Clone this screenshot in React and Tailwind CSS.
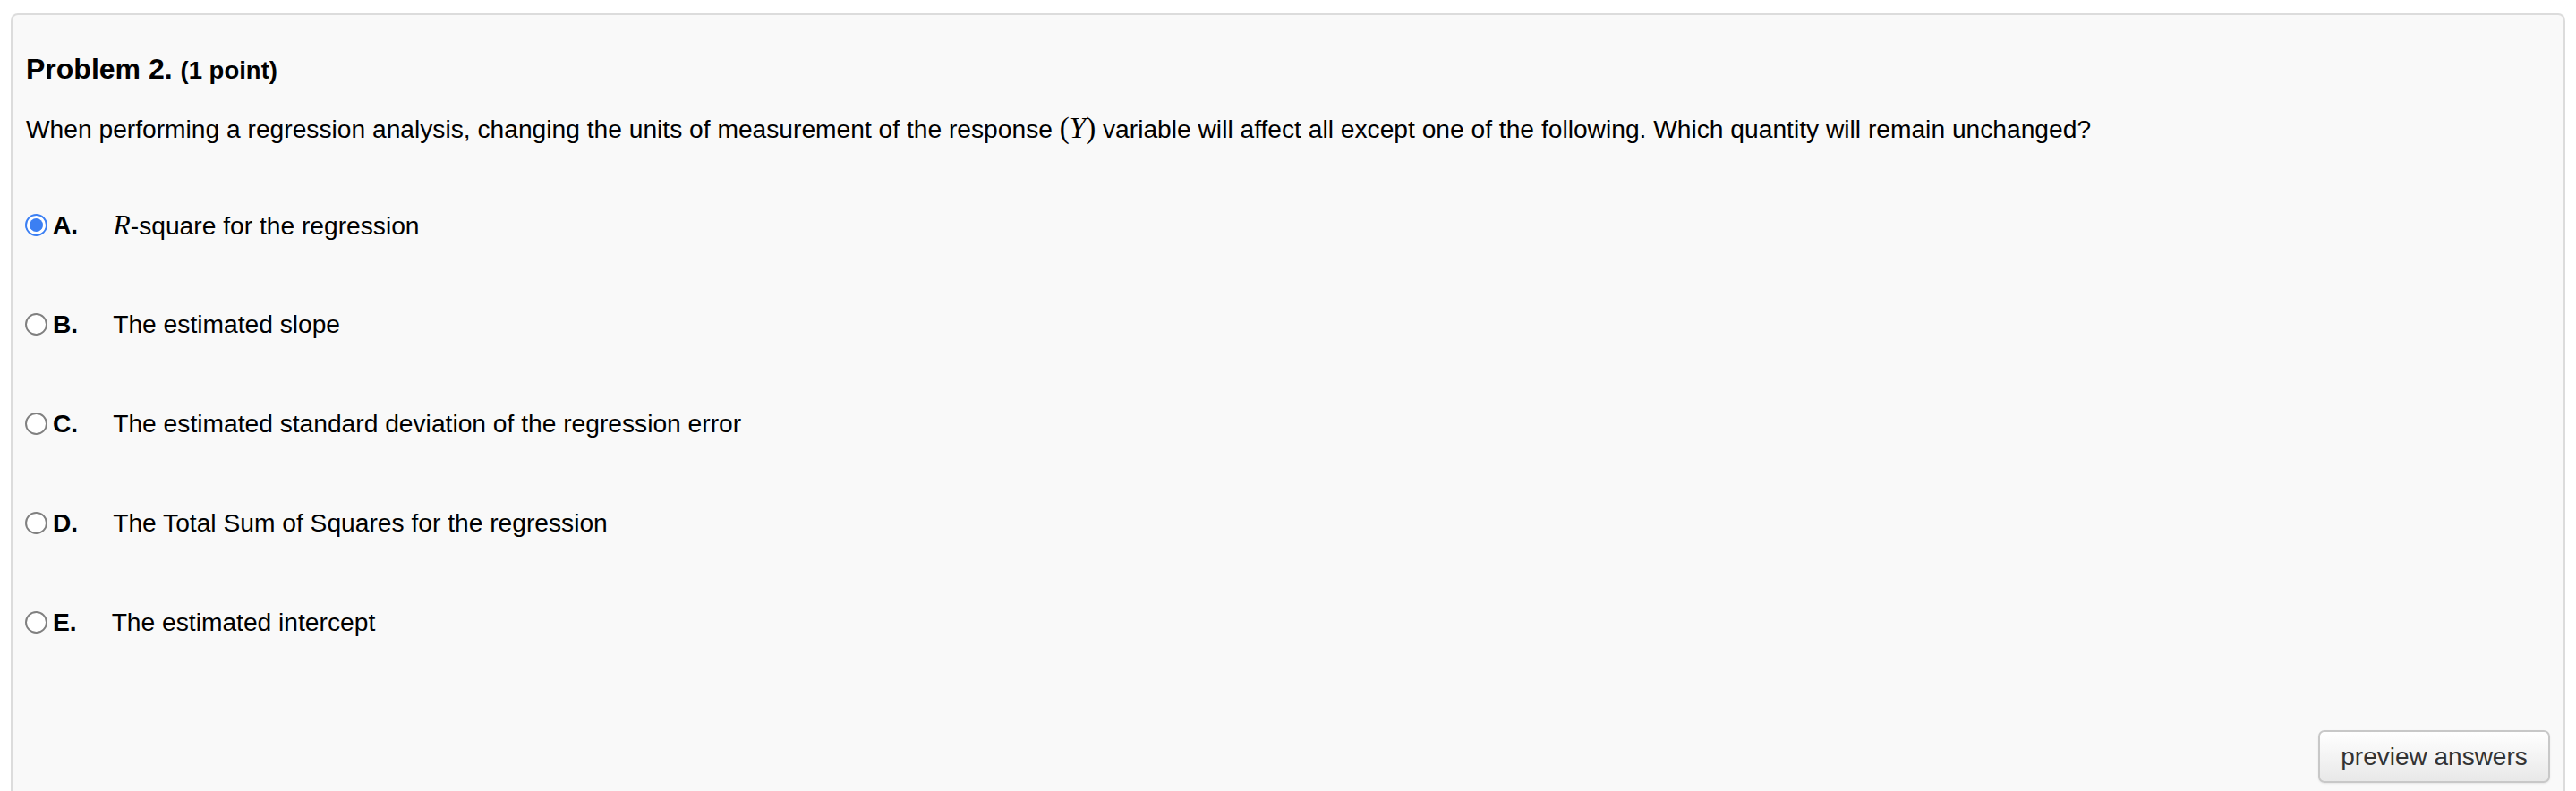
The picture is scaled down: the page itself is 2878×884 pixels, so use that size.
import { useState } from "react";

const options = [
  { key: "A", text: null },
  { key: "B", text: "The estimated slope" },
  { key: "C", text: "The estimated standard deviation of the regression error" },
  { key: "D", text: "The Total Sum of Squares for the regression" },
  { key: "E", text: "The estimated intercept" },
];

const Radio = ({ checked }) =>
  checked ? (
    <span className="flex h-[25px] w-[25px] shrink-0 items-center justify-center rounded-full border-[2.5px] border-[#3b7ff3] bg-white">
      <span className="h-[15px] w-[15px] rounded-full bg-[#3b7ff3]" />
    </span>
  ) : (
    <span className="h-[25px] w-[25px] shrink-0 rounded-full border-2 border-[#808080] bg-white" />
  );

const App = () => {
  const [answer, setAnswer] = useState("A");

  return (
    <div className="min-h-screen bg-white pt-[15px] px-[12px] font-['Liberation_Sans',Arial,sans-serif] text-black">
      <div className="rounded-t-[8px] border-2 border-b-0 border-[#dcdcdc] bg-[#f9f9f9] pl-[15px] pr-[15px] pt-[40px] pb-[12px]">
        <h3 className="text-[32px] leading-[40px] font-bold">
          Problem 2. <span className="text-[27.5px]">(1 point)</span>
        </h3>
        <p className="mt-[26px] text-[28.2px] leading-[36px]">
          When performing a regression analysis, changing the units of measurement of the response{" "}
          <span className="font-['Liberation_Serif',serif] text-[33px] leading-[36px]">
            (<i>Y</i>)
          </span>{" "}
          variable will affect all except one of the following. Which quantity will remain unchanged?
        </p>

        <div className="mt-[71px] flex flex-col gap-[75px]">
          {options.map((o) => (
            <label
              key={o.key}
              onClick={() => setAnswer(o.key)}
              className="-ml-[1px] flex h-[36px] cursor-pointer items-center text-[28.2px] leading-[36px]"
            >
              <Radio checked={answer === o.key} />
              <b className="ml-[6px]">{o.key}.</b>
              <span className="ml-[39px]">
                {o.text ?? (
                  <>
                    <i className="font-['Liberation_Serif',serif] text-[32px]">R</i>-square for the regression
                  </>
                )}
              </span>
            </label>
          ))}
        </div>

        <div className="mt-[103px] flex justify-end">
          <button className="h-[59px] w-[259px] rounded-[7px] border-2 border-[#c8c8c8] bg-gradient-to-b from-white to-[#e8e8e8] text-[28px] text-[#333] shadow-[0_1px_2px_rgba(0,0,0,0.08)]">
            preview answers
          </button>
        </div>
      </div>
    </div>
  );
};

export default App;
